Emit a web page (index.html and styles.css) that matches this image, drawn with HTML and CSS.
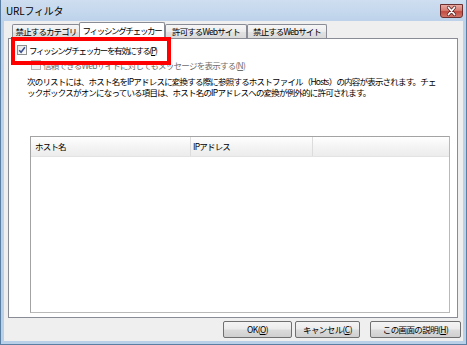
FILE: index.html
```html
<!DOCTYPE html>
<html lang="ja">
<head>
<meta charset="utf-8">
<title>URLフィルタ</title>
<link rel="stylesheet" href="styles.css">
</head>
<body>
<div class="window">
  <div class="titlebar">
    <span class="title">URLフィルタ</span>
    <div class="close">
      <svg width="23" height="14" viewBox="0 0 23 14">
        <path d="M8.5 3.5 L14.5 10.5 M14.5 3.5 L8.5 10.5" stroke="#5a2020" stroke-width="3.2" stroke-linecap="round"/>
        <path d="M8.5 3.5 L14.5 10.5 M14.5 3.5 L8.5 10.5" stroke="#ffffff" stroke-width="1.8" stroke-linecap="round"/>
      </svg>
    </div>
  </div>
  <div class="client">
    <div class="tabs">
      <div class="tab t1">禁止するカテゴリ</div>
      <div class="tab t2 active">フィッシングチェッカー</div>
      <div class="tab t3">許可するWebサイト</div>
      <div class="tab t4">禁止するWebサイト</div>
    </div>
    <div class="panel">
      <div class="highlight"></div>
      <div class="row row1">
        <span class="cb checked">
          <svg width="8" height="8" viewBox="0 0 8 8"><path d="M1.2 4.2 L3.1 6.3 L6.9 1.2" fill="none" stroke="#3a4f8f" stroke-width="1.5"/></svg>
        </span>
        <span class="label">フィッシングチェッカーを有効にする(<u>P</u>)</span>
      </div>
      <div class="row row2 disabled">
        <span class="cb"></span>
        <span class="label">信頼できるWebサイトに対してもメッセージを表示する(<u>N</u>)</span>
      </div>
      <p class="desc">次のリストには、ホスト名をIPアドレスに変換する際に参照するホストファイル（Hosts）の内容が表示されます。チェ<br>ックボックスがオンになっている項目は、ホスト名のIPアドレスへの変換が例外的に許可されます。</p>
      <div class="list">
        <div class="list-head">
          <div class="col c1">ホスト名</div>
          <div class="col c2">IPアドレス</div>
          <div class="col c3"></div>
        </div>
      </div>
    </div>
    <div class="buttons">
      <div class="btn ok">OK(<u>O</u>)</div>
      <div class="btn cancel">キャンセル(<u>C</u>)</div>
      <div class="btn help">この画面の説明(<u>H</u>)</div>
    </div>
  </div>
</div>
</body>
</html>
```

FILE: styles.css
```css
html, body {
  margin: 0;
  padding: 0;
}
body {
  width: 467px;
  height: 345px;
  overflow: hidden;
  font-family: "Noto Sans CJK JP", "Noto Sans", sans-serif;
  color: #000;
  background: #b9d0e8;
}
.window {
  width: 467px;
  height: 345px;
  box-sizing: border-box;
  border: 1px solid #5b7fa3;
  border-top: none;
  padding: 0 3px 3px 3px;
  background: linear-gradient(#cfdef0, #bcd2ea 22px, #b9d0e8);
  display: flex;
  flex-direction: column;
}
.titlebar {
  height: 21px;
  flex: none;
  position: relative;
  display: flex;
  align-items: center;
}
.title {
  font-size: 10px;
  padding-left: 2px;
  margin-top: -1px;
  letter-spacing: -0.2px;
}
.close {
  position: absolute;
  right: 0;
  top: 4px;
  width: 23px;
  height: 14px;
  box-sizing: border-box;
  border: 1px solid #6b2f2f;
  border-radius: 0 0 3px 3px;
  background: linear-gradient(#e9aba3, #d77e74 45%, #c24b40 55%, #d2756a);
}
.close svg {
  position: absolute;
  left: -1px;
  top: -1px;
}
.client {
  flex: 1;
  background: #efefef;
  display: flex;
  flex-direction: column;
  padding: 3px 5px 0 4px;
}
.tabs {
  height: 14px;
  flex: none;
  display: flex;
  align-items: flex-start;
  margin-left: 4px;
}
.tab {
  box-sizing: border-box;
  height: 14px;
  border: 1px solid #898c95;
  border-bottom: none;
  border-radius: 2px 2px 0 0;
  background: linear-gradient(#f6f6f6, #ececec 50%, #e2e2e2 51%, #dadada);
  font-size: 8.5px;
  line-height: 12px;
  letter-spacing: -0.9px;
  text-align: center;
  white-space: nowrap;
  overflow: hidden;
}
.t1 { width: 68px; }
.t2 { width: 86px; margin-left: -1px; }
.t3 { width: 82px; }
.t4 { width: 80px; margin-left: 0; }
.tab.active {
  height: 17px;
  margin-top: -2px;
  background: #ffffff;
  position: relative;
  z-index: 2;
  line-height: 15px;
  letter-spacing: -1.3px;
}
.panel {
  position: relative;
  box-sizing: border-box;
  height: 280px;
  flex: none;
  border: 1px solid #898c95;
  background: #ffffff;
  font-size: 8.5px;
  letter-spacing: -0.8px;
}
.highlight {
  position: absolute;
  left: 2px;
  top: -2px;
  width: 160px;
  height: 28px;
  box-sizing: border-box;
  border: 4px solid #ff0000;
  z-index: 3;
}
.row {
  display: flex;
  align-items: center;
  height: 12px;
  white-space: nowrap;
}
.row1 {
  margin-top: 5px;
  padding-left: 8px;
}
.row1 .label {
  letter-spacing: -1.4px;
}
.row2 {
  margin-top: 3px;
  padding-left: 22px;
}
.row2 .label {
  letter-spacing: -0.75px;
}
.cb {
  width: 10px;
  height: 10px;
  box-sizing: border-box;
  border: 1px solid #8e8f8f;
  background: linear-gradient(135deg, #dcdcdc, #f6f6f6);
  display: flex;
  align-items: center;
  justify-content: center;
  margin-right: 2px;
  flex: none;
}
.cb.checked {
  background: linear-gradient(135deg, #e4e4e4, #ffffff);
}
.disabled .cb {
  border-color: #b5b5b5;
  background: #f2f2f2;
}
.disabled .label {
  color: #6d6d6d;
}
.desc {
  margin: 5px 0 0 0;
  padding-left: 18px;
  line-height: 11px;
  white-space: nowrap;
  letter-spacing: -0.8px;
}
.list {
  margin-top: 38px;
  margin-left: 21px;
  width: 420px;
  height: 177px;
  box-sizing: border-box;
  border: 1px solid #a3a3a3;
  border-right-color: #b9b9b9;
  border-bottom-color: #b9b9b9;
}
.list-head {
  display: flex;
  height: 19px;
  background: linear-gradient(#ffffff, #f4f4f4 50%, #ececec);
  border-bottom: 1px solid #e3e3e3;
}
.col {
  box-sizing: border-box;
  line-height: 19px;
  white-space: nowrap;
}
.c1 {
  width: 160px;
  padding-left: 4px;
  border-right: 1px solid #dcdcdc;
}
.c2 {
  width: 122px;
  padding-left: 2px;
  border-right: 1px solid #dcdcdc;
}
.c3 {
  flex: 1;
}
.buttons {
  flex: none;
  display: flex;
  justify-content: flex-end;
  margin-top: 3px;
  margin-right: -3px;
  height: 17px;
}
.btn {
  box-sizing: border-box;
  height: 17px;
  border: 1px solid #707070;
  border-radius: 2px;
  background: linear-gradient(#f4f4f4, #ebebeb 48%, #dcdcdc 52%, #cfcfcf);
  font-size: 8.5px;
  letter-spacing: -0.6px;
  line-height: 15px;
  text-align: center;
  white-space: nowrap;
}
.ok { width: 69px; }
.cancel { width: 65px; margin-left: 3px; }
.help { width: 91px; margin-left: 10px; }
```
